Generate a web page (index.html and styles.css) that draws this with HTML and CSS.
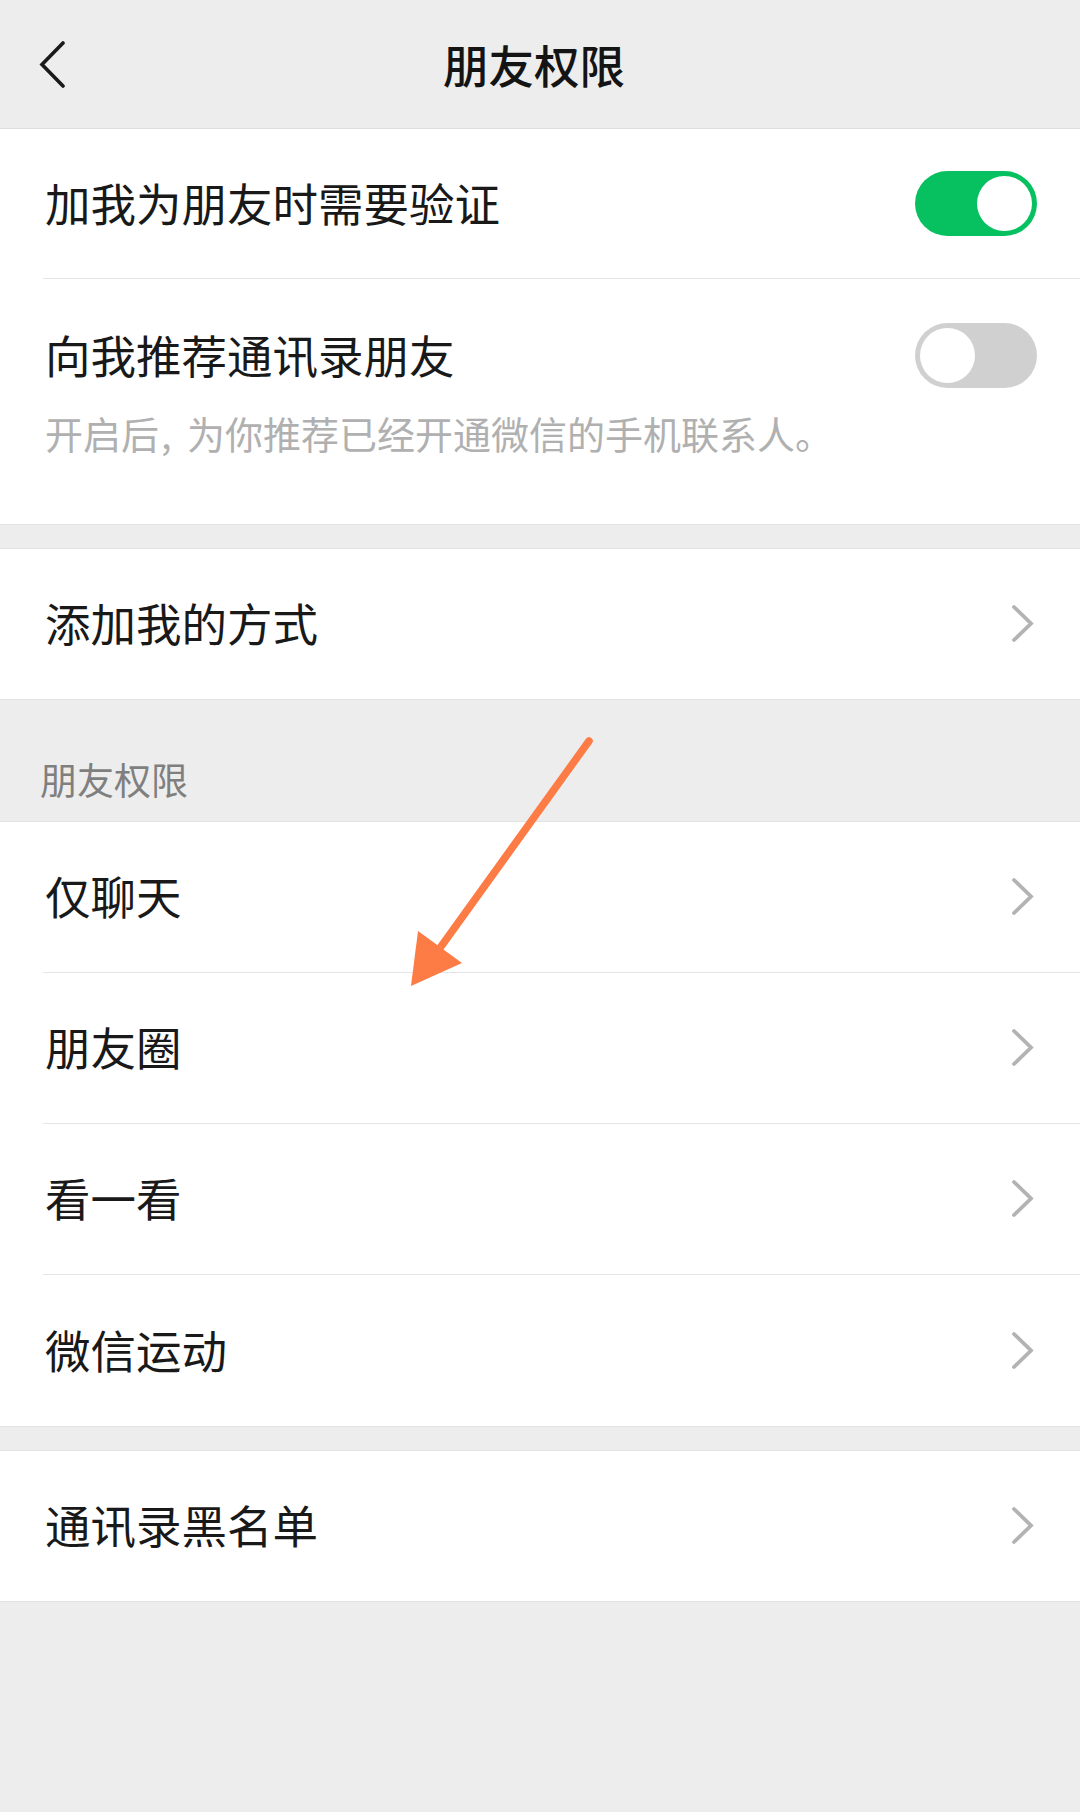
FILE: index.html
```html
<!DOCTYPE html>
<html lang="zh-CN">
<head>
<meta charset="utf-8">
<title>朋友权限</title>
<link rel="stylesheet" href="styles.css">
</head>
<body>
<div class="page">
  <header class="nav">
    <svg class="back" width="30" height="50" viewBox="0 0 30 50"><polyline points="24,2 3,23.5 24,45" fill="none" stroke="#1a1a1a" stroke-width="3.6" stroke-linecap="round" stroke-linejoin="miter"/></svg>
    <h1 class="nav-title">朋友权限</h1>
  </header>

  <section class="group">
    <div class="row">
      <span class="label">加我为朋友时需要验证</span>
      <span class="toggle on"><span class="knob"></span></span>
    </div>
    <div class="row row-tall">
      <div class="row-main">
        <span class="label">向我推荐通讯录朋友</span>
        <span class="toggle off"><span class="knob"></span></span>
      </div>
      <p class="desc">开启后<span class="comma">,</span>为你推荐已经开通微信的手机联系人。</p>
    </div>
  </section>

  <div class="spacer"></div>

  <section class="group">
    <div class="row">
      <span class="label">添加我的方式</span>
      <svg class="chev" width="24" height="40" viewBox="0 0 24 40"><polyline points="3,3 20,19.5 3,36" fill="none" stroke="#b3b3b3" stroke-width="3.8" stroke-linecap="round"/></svg>
    </div>
  </section>

  <div class="group-head">朋友权限</div>

  <section class="group group-perm">
    <div class="row">
      <span class="label">仅聊天</span>
      <svg class="chev" width="24" height="40" viewBox="0 0 24 40"><polyline points="3,3 20,19.5 3,36" fill="none" stroke="#b3b3b3" stroke-width="3.8" stroke-linecap="round"/></svg>
    </div>
    <div class="row">
      <span class="label">朋友圈</span>
      <svg class="chev" width="24" height="40" viewBox="0 0 24 40"><polyline points="3,3 20,19.5 3,36" fill="none" stroke="#b3b3b3" stroke-width="3.8" stroke-linecap="round"/></svg>
    </div>
    <div class="row">
      <span class="label">看一看</span>
      <svg class="chev" width="24" height="40" viewBox="0 0 24 40"><polyline points="3,3 20,19.5 3,36" fill="none" stroke="#b3b3b3" stroke-width="3.8" stroke-linecap="round"/></svg>
    </div>
    <div class="row">
      <span class="label">微信运动</span>
      <svg class="chev" width="24" height="40" viewBox="0 0 24 40"><polyline points="3,3 20,19.5 3,36" fill="none" stroke="#b3b3b3" stroke-width="3.8" stroke-linecap="round"/></svg>
    </div>
  </section>

  <div class="spacer"></div>

  <section class="group">
    <div class="row">
      <span class="label">通讯录黑名单</span>
      <svg class="chev" width="24" height="40" viewBox="0 0 24 40"><polyline points="3,3 20,19.5 3,36" fill="none" stroke="#b3b3b3" stroke-width="3.8" stroke-linecap="round"/></svg>
    </div>
  </section>

  <svg class="arrow" width="1080" height="1812" viewBox="0 0 1080 1812">
    <line x1="589" y1="741" x2="440" y2="948" stroke="#fd7b44" stroke-width="7.5" stroke-linecap="round"/>
    <polygon points="418,931 462,963 411,986" fill="#fd7b44"/>
  </svg>
</div>
</body>
</html>
```

FILE: styles.css
```css
* {
  box-sizing: border-box;
}

html, body {
  margin: 0;
  padding: 0;
}

body {
  background: #ededed;
  font-family: "Noto Sans CJK SC", "Noto Sans", "Liberation Sans", sans-serif;
  color: #191919;
}

.page {
  position: relative;
  width: 1080px;
  min-height: 1812px;
  background: #ededed;
}

.nav {
  height: 129px;
  display: flex;
  align-items: center;
  justify-content: center;
  position: relative;
  border-bottom: 1px solid #dedede;
  background: #ededed;
}

.back {
  position: absolute;
  left: 39px;
  top: 41px;
}

.nav-title {
  margin: 0;
  font-size: 45.5px;
  font-weight: 500;
  line-height: 60px;
  color: #141414;
  padding-right: 12px;
}

.group {
  background: #ffffff;
  border-top: 1px solid #e2e2e2;
  border-bottom: 1px solid #e2e2e2;
}

.nav + .group {
  border-top: none;
}

.row {
  margin-left: 43px;
  padding-left: 2px;
  padding-right: 43px;
  height: 150px;
  display: flex;
  align-items: center;
  justify-content: space-between;
  border-bottom: 1px solid #e5e5e5;
}

.group-perm .row {
  height: 151px;
}

.row:last-child {
  border-bottom: none;
}

.row .chev {
  margin-right: 2px;
}

.row-tall {
  height: 245px;
  flex-direction: column;
  align-items: stretch;
  justify-content: flex-start;
  padding-top: 44px;
}

.row-main {
  display: flex;
  align-items: center;
  justify-content: space-between;
  height: 65px;
}

.label {
  font-size: 45.5px;
  line-height: 60px;
  padding-bottom: 4px;
  color: #191919;
}

.desc {
  margin: 20px 0 0 0;
  font-size: 38px;
  line-height: 50px;
  color: #b0b0b0;
}

.comma {
  display: inline-block;
  width: 28px;
  padding-left: 2px;
}

.toggle {
  width: 122px;
  height: 65px;
  border-radius: 33px;
  padding: 5px;
  display: flex;
  flex-shrink: 0;
}

.toggle.on {
  background: #07c160;
  justify-content: flex-end;
}

.toggle.off {
  background: #d0d0d0;
  justify-content: flex-start;
}

.knob {
  width: 55px;
  height: 55px;
  border-radius: 50%;
  background: #ffffff;
}

.spacer {
  height: 23px;
}

.group-head {
  height: 121px;
  display: flex;
  align-items: flex-end;
  padding-left: 40px;
  padding-bottom: 17px;
  font-size: 37px;
  line-height: 50px;
  color: #7f7f7f;
}

.arrow {
  position: absolute;
  left: 0;
  top: 0;
  pointer-events: none;
}
```
